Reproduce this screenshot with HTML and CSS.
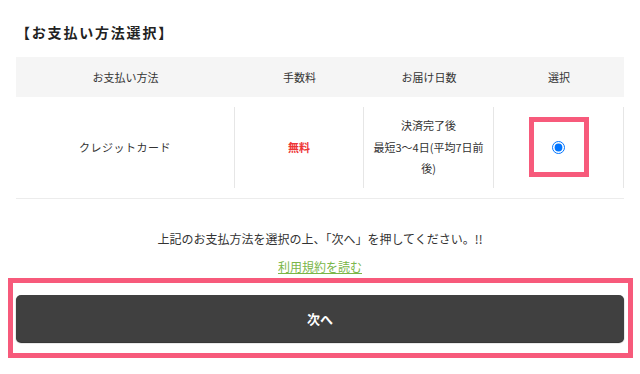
FILE: index.html
```html
<!DOCTYPE html>
<html lang="ja">
<head>
  <meta charset="UTF-8" />
  <meta name="viewport" content="width=device-width, initial-scale=1" />
  <title>お支払い方法選択</title>
  <link rel="stylesheet" href="styles.css">
</head>
<body>
  <div class="container">
    <h2 class="title">【お支払い方法選択】</h2>

    <div class="pay-table">
      <div class="row head">
        <div class="cell c1">お支払い方法</div>
        <div class="cell c2">手数料</div>
        <div class="cell c3">お届け日数</div>
        <div class="cell c4">選択</div>
      </div>
      <div class="row body">
        <div class="cell c1 kana">クレジットカード</div>
        <div class="cell c2 free">無料</div>
        <div class="cell c3">決済完了後<br>最短3〜4日(平均7日前後)</div>
        <div class="cell c4">
          <span class="mark">
            <input type="radio" name="pay" value="credit" checked>
          </span>
        </div>
      </div>
    </div>

    <p class="note">上記のお支払方法を選択の上、「次へ」を押してください。!!</p>
    <p class="terms"><a href="#">利用規約を読む</a></p>

    <div class="next-wrap">
      <button type="button" class="next">次へ</button>
    </div>
  </div>
</body>
</html>
```

FILE: styles.css
```css
body {
  margin: 0;
  background: #fff;
  color: #333;
  font-family: "Noto Sans CJK JP", "Noto Sans", sans-serif;
}
.container {
  padding: 0 16px;
}
.title {
  margin: 22px 0 15px;
  font-size: 14px;
  line-height: 20px;
  font-weight: bold;
  letter-spacing: 1.8px;
  color: #222;
}
.row {
  display: flex;
}
.head {
  height: 40px;
  background: #f5f5f5;
  align-items: center;
}
.body {
  padding: 10px 0;
  border-bottom: 1px solid #ececec;
}
.cell {
  font-size: 11px;
  text-align: center;
  box-sizing: border-box;
}
.c1 { width: 219px; }
.c2 { width: 129px; }
.c3 { width: 130px; }
.c4 { width: 130px; }
.body .cell {
  display: flex;
  align-items: center;
  justify-content: center;
  padding: 8px 8px;
  line-height: 21.5px;
  border-right: 1px solid #e6e6e6;
}
.kana {
  letter-spacing: 0.5px;
}
.free {
  color: #ee3535;
  font-weight: bold;
}
.mark {
  display: flex;
  align-items: center;
  justify-content: center;
  width: 50px;
  height: 50px;
  border: 5px solid #f75a7b;
}
.mark input {
  margin: 0;
  width: 13px;
  height: 13px;
}
.note {
  margin: 30px 0 0;
  font-size: 12px;
  line-height: 20px;
  text-align: center;
}
.terms {
  margin: 8px 0 0;
  font-size: 12px;
  line-height: 20px;
  text-align: center;
}
.terms a {
  color: #7ab648;
}
.next-wrap {
  margin: 1px -9px 0 -8px;
  padding: 12px 4px 11px 3px;
  border: 5px solid #f75a7b;
}
.next {
  display: block;
  width: 100%;
  height: 47px;
  background: #404040;
  color: #fff;
  border: none;
  border-radius: 5px;
  box-shadow: 0 1px 1px #222;
  font-family: inherit;
  font-size: 13px;
  font-weight: bold;
  cursor: pointer;
}
```
